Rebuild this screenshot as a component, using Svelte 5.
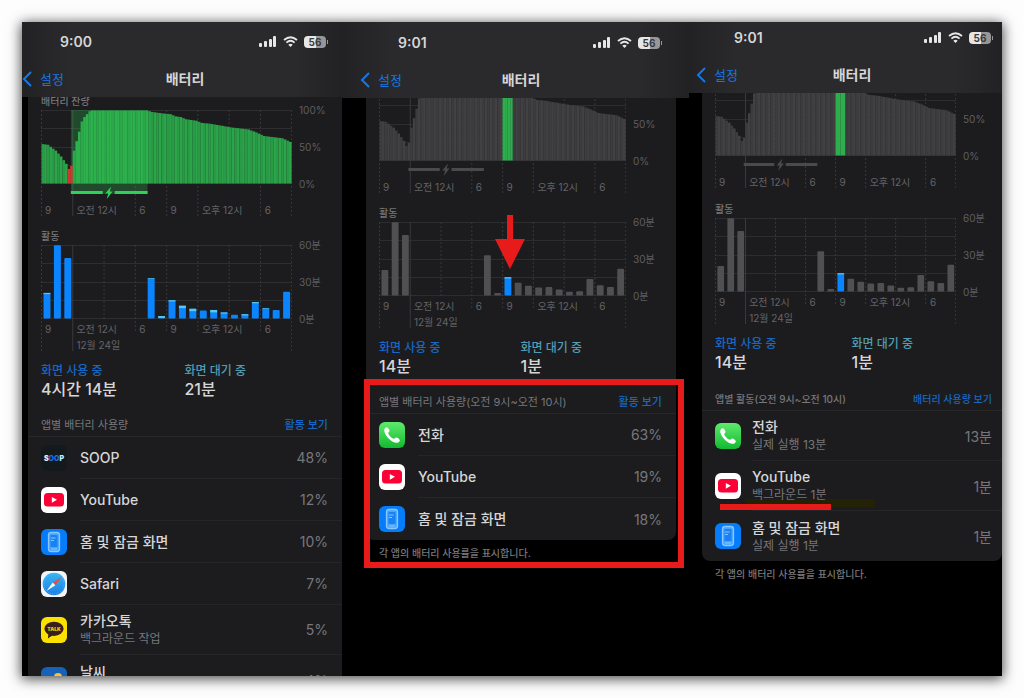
<script>
    // [slot, percent] pairs, one slot per 15 minutes
    const levelPoints = [
        [0, 54], [2, 53], [5, 45], [7, 37], [9, 27], [10, 20], [11, 24],
        [12, 45], [13, 58], [14, 71], [15, 85], [16, 91], [17, 95], [18, 99],
        [19, 100], [40, 100], [42, 98], [46, 96], [49, 95], [51, 92], [53, 91],
        [55, 88], [59, 86], [61, 83], [64, 82], [69, 79], [72, 77], [79, 74],
        [82, 70], [85, 65], [92, 62], [95, 57],
    ];

    const levels = Array.from({ length: 96 }, (_, slot) => {
        const next = levelPoints.findIndex((p) => p[0] >= slot);
        const [x2, y2] = levelPoints[next];
        if (x2 === slot) return y2;
        const [x1, y1] = levelPoints[next - 1];
        return y1 + ((y2 - y1) * (slot - x1)) / (x2 - x1);
    });

    // minutes per hour: [total, screen-off part]
    const activity = [
        [21, 1], [60, 0], [49.5, 0], [0, 0], [0, 0], [0, 0], [0, 0], [0, 0],
        [0, 0], [0, 0], [33, 0.5], [2, 1.5], [15, 1], [10.5, 2], [8, 2],
        [6.5, 0], [7, 2], [5, 1], [3, 0], [3.5, 1], [13.5, 1], [8.5, 0.5],
        [7, 0], [22, 0],
    ];

    const ticks = [
        { label: "9", span: 1 },
        { label: "오전 12시", span: 2 },
        { label: "6", span: 1 },
        { label: "9", span: 1 },
        { label: "오후 12시", span: 2 },
        { label: "6", span: 1 },
    ];

    const phones = [
        {
            id: "day",
            time: "9:00",
            selected: null,
            onTime: "4시간 14분",
            offTime: "21분",
            title: "앱별 배터리 사용량",
            action: "활동 보기",
            apps: [
                { icon: "soop", name: "SOOP", value: "48%" },
                { icon: "youtube", name: "YouTube", value: "12%" },
                { icon: "home", name: "홈 및 잠금 화면", value: "10%" },
                { icon: "safari", name: "Safari", value: "7%" },
                { icon: "kakao", name: "카카오톡", note: "백그라운드 작업", value: "5%" },
                { icon: "weather", name: "날씨", note: "백그라운드 작업", value: "4%" },
            ],
        },
        {
            id: "usage",
            time: "9:01",
            selected: 12,
            onTime: "14분",
            offTime: "1분",
            title: "앱별 배터리 사용량(오전 9시~오전 10시)",
            action: "활동 보기",
            apps: [
                { icon: "phone", name: "전화", value: "63%" },
                { icon: "youtube", name: "YouTube", value: "19%" },
                { icon: "home", name: "홈 및 잠금 화면", value: "18%" },
            ],
            footer: "각 앱의 배터리 사용률을 표시합니다.",
        },
        {
            id: "activity",
            time: "9:01",
            selected: 12,
            onTime: "14분",
            offTime: "1분",
            title: "앱별 활동(오전 9시~오전 10시)",
            action: "배터리 사용량 보기",
            apps: [
                { icon: "phone", name: "전화", note: "실제 실행 13분", value: "13분" },
                { icon: "youtube", name: "YouTube", note: "백그라운드 1분", value: "1분", marked: true },
                { icon: "home", name: "홈 및 잠금 화면", note: "실제 실행 1분", value: "1분" },
            ],
            footer: "각 앱의 배터리 사용률을 표시합니다.",
        },
    ];

    function levelColor(slot, selected) {
        if (selected !== null) {
            if (Math.floor(slot / 4) === selected) return "#2fae4e";
            return slot % 2 ? "#414143" : "#3c3c3e";
        }
        if (levels[slot] < 25) return "#d0382f";
        if (slot > 11 && slot < 41) return slot % 3 ? "#2db14d" : "#2ba94a";
        return slot % 2 ? "#2ca54a" : "#299a46";
    }
</script>

{#snippet gridLines(short)}
    {#each [0, 18, 37, 55, 73] as y}
        <line x1="0" x2="252" y1={y + 0.5} y2={y + 0.5} stroke="#2e2e30" />
    {/each}
    {#each [0, 1, 2, 3, 4, 5, 6, 7, 8] as n}
        <line
            x1={n * 31.4 + 0.5}
            x2={n * 31.4 + 0.5}
            y1="0"
            y2={n > 1 && n < 8 ? (n % 4 === 2 ? 74 : short) : 106}
            stroke={n === 1 ? "#3a3a3c" : "#39393b"}
            stroke-dasharray={n === 1 ? "none" : "2 2"}
        />
    {/each}
{/snippet}

{#snippet appIcon(name)}
    <svg class="app-icon" viewBox="0 0 26 26" aria-hidden="true">
        <defs>
            <linearGradient id="call" x1="0" y1="0" x2="0" y2="1">
                <stop offset="0" stop-color="#5fea6d" />
                <stop offset="1" stop-color="#12ba31" />
            </linearGradient>
            <linearGradient id="compass" x1="0" y1="0" x2="0" y2="1">
                <stop offset="0" stop-color="#35b6f2" />
                <stop offset="1" stop-color="#1d7fe6" />
            </linearGradient>
        </defs>
        {#if name === "soop"}
            <rect width="26" height="26" rx="6" fill="#14191d" />
            <text x="13" y="15.5" text-anchor="middle" font-size="7" font-weight="900" fill="#e8eef2"
                >S<tspan fill="#1c6fe8">OO</tspan><tspan fill="#c4f0f0">P</tspan></text
            >
        {:else if name === "youtube"}
            <rect width="26" height="26" rx="6" fill="#fff" />
            <rect x="3" y="6" width="20" height="13.5" rx="3.5" fill="#fb0236" />
            <path d="M10.8 9.9 L16 12.8 L10.8 15.7 Z" fill="#fff" />
        {:else if name === "home"}
            <rect width="26" height="26" rx="6" fill="#057cf9" />
            <rect x="7.5" y="3.5" width="11" height="19" rx="2.5" fill="#4aa3fc" stroke="#8ac6ff" stroke-width="1.3" />
            <rect x="9.5" y="6" width="7" height="12" rx="1" fill="#1782f3" />
            <path d="M10 9h4.5M10 11.5h3M10 20h6" stroke="#8ac6ff" stroke-width="1" fill="none" />
        {:else if name === "safari"}
            <rect width="26" height="26" rx="6" fill="#f4f4f6" />
            <circle cx="13" cy="13" r="11.3" fill="url(#compass)" />
            <circle cx="13" cy="13" r="10" fill="none" stroke="#7cc8fb" stroke-width="1" stroke-dasharray="0.5 1.6" />
            <path d="M20.5 6 L11.7 11.5 L14.4 14.3 Z" fill="#ee4b40" />
            <path d="M5.5 20 L11.7 11.5 L14.4 14.3 Z" fill="#f4f6f8" />
        {:else if name === "kakao"}
            <rect width="26" height="26" rx="6" fill="#fae100" />
            <ellipse cx="13" cy="11.8" rx="9.6" ry="7.1" fill="#3a1d1d" />
            <path d="M7.5 16 L6.9 21.4 L12 18 Z" fill="#3a1d1d" />
            <text x="13" y="13.8" text-anchor="middle" font-size="5" font-weight="900" fill="#e6cd04">TALK</text>
        {:else if name === "weather"}
            <rect width="26" height="26" rx="6" fill="#1762b8" />
            <circle cx="17" cy="10" r="4" fill="#f7c52d" />
            <path d="M5 17a4 4 0 0 1 4-4 5 5 0 0 1 9 1 3 3 0 0 1 1 6H8a3 3 0 0 1-3-3z" fill="#e6f1fb" />
        {:else}
            <rect width="26" height="26" rx="6" fill="url(#call)" />
            <path
                d="M5.4 7.2 C6 5.8 7.2 4.9 8 5.2 C9.3 5.8 10.3 7.6 10.5 8.7 C10.6 9.7 9.2 10.3 9.2 11.2 C9.5 13 13 16.4 14.8 16.8 C15.8 16.8 16.3 15.4 17.3 15.5 C18.5 15.7 20.3 16.8 20.8 18 C21.1 18.9 20 20.2 18.7 20.7 C16.5 21.4 12.5 19.4 9.6 16.4 C6.7 13.5 4.6 9.4 5.4 7.2 Z"
                fill="#fff"
            />
        {/if}
    </svg>
{/snippet}

<main class="page">
    <div class="sheet">
        {#each phones as phone}
            <section class="phone {phone.id}">
                <header class="header">
                    <div class="status">
                        <span class="time">{phone.time}</span>
                        <div class="indicators">
                            <svg width="18" height="12" viewBox="0 0 18 12" fill="#e6e6e6">
                                <rect x="0" y="7" width="3" height="4" rx="1" />
                                <rect x="5" y="5" width="3" height="6" rx="1" />
                                <rect x="10" y="3" width="3" height="8" rx="1" />
                                <rect x="14" y="0" width="3" height="11" rx="1" />
                            </svg>
                            <svg width="15" height="12" viewBox="0 0 15 12" fill="none" stroke="#e6e6e6" stroke-width="1.8">
                                <path d="M1 4 Q7.5 -1.5 14 4" />
                                <path d="M3.4 6.6 Q7.5 3 11.6 6.6" />
                                <path d="M5.3 8.7 Q7.5 7 9.7 8.7 L7.5 11 Z" fill="#e6e6e6" stroke="none" />
                            </svg>
                            <span class="battery">56</span>
                        </div>
                    </div>
                    <nav class="nav">
                        <button class="back">
                            <svg width="10" height="16" viewBox="0 0 10 16" fill="none">
                                <path d="M8.5 1.5 L2 8 L8.5 14.5" stroke="#1478e6" stroke-width="2" stroke-linecap="round" />
                            </svg>
                            <span>설정</span>
                        </button>
                        <h1>배터리</h1>
                    </nav>
                </header>

                <div class="body">
                    <div class="card">
                        <!-- Battery level, caption is scrolled away on the hour views -->
                        {#if phone.selected === null}
                            <h2 class="caption">배터리 잔량</h2>
                        {/if}
                        <div class="chart">
                            <div class="plot">
                                <svg viewBox="0 0 252 106" preserveAspectRatio="none">
                                    {@render gridLines(106)}
                                    {#if phone.selected === null}
                                        <rect x="30" y="0" width="77" height="84" fill="#2fd158" opacity="0.25" />
                                    {/if}
                                    {#each levels as level, slot}
                                        <rect
                                            x={slot * 2.615 + 0.5}
                                            y={73.5 - level * 0.73}
                                            width="2.7"
                                            height={level * 0.73}
                                            fill={levelColor(slot, phone.selected)}
                                        />
                                    {/each}
                                    <g class="charging" class:muted={phone.selected !== null}>
                                        <path d="M30 82.5 H62 M74 82.5 H107" stroke="currentColor" stroke-width="3" />
                                        <path d="M70.5 76.5 L64.5 83.5 H67.5 L66 89 L72 81.5 H69 Z" fill="currentColor" />
                                    </g>
                                </svg>
                                <div class="ticks">
                                    {#each ticks as tick}
                                        <span style="grid-column: span {tick.span}">{tick.label}</span>
                                    {/each}
                                </div>
                            </div>
                            <div class="scale">
                                <span>100%</span>
                                <span>50%</span>
                                <span>0%</span>
                            </div>
                        </div>

                        <!-- Activity -->
                        <h2 class="caption second">활동</h2>
                        <div class="chart">
                            <div class="plot">
                                <svg viewBox="0 0 252 106" preserveAspectRatio="none">
                                    {@render gridLines(88)}
                                    {#each activity as [total, off], hour}
                                        {@const dim = phone.selected !== null && phone.selected !== hour}
                                        {#if total}
                                            <rect
                                                x={hour * 10.46 + 2.5}
                                                y={73.5 - total * 1.22}
                                                width="7"
                                                height={total * 1.22}
                                                rx="1"
                                                fill={dim ? "#505052" : "#0a84ff"}
                                            />
                                            {#if off && !dim}
                                                <rect
                                                    x={hour * 10.46 + 2.5}
                                                    y={73.5 - total * 1.22}
                                                    width="7"
                                                    height={off * 1.22}
                                                    fill="#5ac8e8"
                                                />
                                            {/if}
                                        {/if}
                                    {/each}
                                </svg>
                                <div class="ticks dated">
                                    {#each ticks as tick}
                                        <span style="grid-column: span {tick.span}">{tick.label}</span>
                                    {/each}
                                    <span class="date">12월 24일</span>
                                </div>
                            </div>
                            <div class="scale">
                                <span>60분</span>
                                <span>30분</span>
                                <span>0분</span>
                            </div>
                        </div>

                        <dl class="summary">
                            <div>
                                <dt class="on">화면 사용 중</dt>
                                <dd>{phone.onTime}</dd>
                            </div>
                            <div>
                                <dt class="off">화면 대기 중</dt>
                                <dd>{phone.offTime}</dd>
                            </div>
                        </dl>

                        <div class="list-head">
                            <h2>{phone.title}</h2>
                            <button class="link">{phone.action}</button>
                        </div>
                        <ul class="apps">
                            {#each phone.apps as app}
                                <li class="app" class:tall={app.note}>
                                    {#if app.marked}
                                        <i class="marker"></i>
                                        <i class="underline"></i>
                                    {/if}
                                    {@render appIcon(app.icon)}
                                    <div class="app-row">
                                        <div class="app-text">
                                            <span class="name">{app.name}</span>
                                            {#if app.note}
                                                <span class="note">{app.note}</span>
                                            {/if}
                                        </div>
                                        <span class="value">{app.value}</span>
                                    </div>
                                </li>
                            {/each}
                        </ul>
                    </div>
                    {#if phone.footer}
                        <p class="footer">{phone.footer}</p>
                    {/if}
                </div>

                {#if phone.id === "usage"}
                    <svg class="arrow" width="32" height="54" viewBox="0 0 32 54">
                        <path d="M13 0 H19 V24 H31 L16 54 L1 24 H13 Z" fill="#e81b1b" />
                    </svg>
                    <div class="frame"></div>
                {/if}
            </section>
        {/each}
    </div>
</main>

<style>
    :global(body) {
        margin: 0;
        background: #fdfdfd;
    }

    .page {
        box-sizing: border-box;
        height: 100vh;
        padding: 22px;
        font-family: Inter, "Noto Sans CJK KR", sans-serif;
        color: #d6d6d8;
    }

    .sheet {
        display: grid;
        grid-template-columns: 320fr 347fr 313fr;
        grid-template-rows: 100%;
        height: 100%;
        background: #000;
        box-shadow: 0 2px 12px 1px rgba(0, 0, 0, 0.7);
    }

    .phone {
        --left: 6px;
        --right: 0px;
        --top: 12px;
        --scroll: -12px;
        --edge: 14px;
        position: relative;
        display: flex;
        flex-direction: column;
        min-width: 0;
        overflow: hidden;
    }

    .phone.usage {
        --left: 24px;
        --right: 13px;
        --top: 13px;
        --scroll: -21px;
    }

    .phone.activity {
        --left: 13px;
        --top: 8px;
        --scroll: -21px;
        --edge: 10px;
    }

    h1,
    h2,
    p,
    dl,
    dd,
    ul {
        margin: 0;
        padding: 0;
    }

    button {
        padding: 0;
        border: none;
        background: none;
        font-family: inherit;
        cursor: pointer;
    }

    .header {
        position: relative;
        z-index: 1;
        padding: var(--top) var(--right) 8px var(--left);
        background: linear-gradient(90deg, #222224, #2a2a2c 15%, #2a2a2c 85%, #222224);
    }

    .status {
        display: flex;
        justify-content: space-between;
        align-items: center;
        height: 16px;
        padding: 0 16px 0 32px;
    }

    .activity .status {
        padding-right: 11px;
    }

    .time {
        font-size: 14px;
        font-weight: 600;
        line-height: 16px;
    }

    .indicators {
        display: flex;
        align-items: center;
        gap: 6px;
    }

    .battery {
        position: relative;
        width: 22px;
        border-radius: 4px;
        background: linear-gradient(90deg, #e6e6e6 56%, #97979a 56%);
        color: #3a3a3c;
        font-size: 10px;
        font-weight: 700;
        line-height: 12px;
        text-align: center;
    }

    .battery::after {
        content: "";
        position: absolute;
        top: 4px;
        right: -2px;
        width: 1px;
        height: 4px;
        background: #97979a;
    }

    .nav {
        display: grid;
        grid-template-columns: 1fr auto 1fr;
        align-items: center;
        height: 20px;
        margin-top: 19px;
    }

    .back {
        display: flex;
        align-items: center;
        gap: 8px;
        margin-left: -6px;
        color: #1478e6;
        font-size: 13px;
        line-height: 20px;
    }

    .nav h1 {
        font-size: 14px;
        font-weight: 600;
        line-height: 20px;
    }

    .body {
        margin: var(--scroll) var(--right) 0 var(--left);
    }

    .card {
        padding: 10px 0 0 13px;
        border-radius: 0 0 8px 8px;
        background: #1c1c1e;
    }

    .caption {
        margin-bottom: 3px;
        color: #77777b;
        font-size: 10px;
        font-weight: 500;
        line-height: 12px;
    }

    .caption.second {
        margin-top: 14px;
    }

    .activity .caption.second {
        margin-top: 15px;
    }

    .chart {
        display: flex;
        margin-right: var(--edge);
    }

    .plot {
        flex: 1;
        display: grid;
        min-width: 0;
    }

    .plot svg {
        grid-area: 1 / 1;
        display: block;
        width: 100%;
        height: 106px;
    }

    .charging {
        color: #30d158;
    }

    .charging.muted {
        color: #4a4a4c;
    }

    .ticks {
        grid-area: 1 / 1;
        display: grid;
        grid-template-columns: repeat(8, 1fr);
        align-content: start;
        padding-top: 94px;
        color: #646468;
        font-size: 10px;
        line-height: 12px;
    }

    .ticks.dated {
        row-gap: 4px;
        padding-top: 78px;
    }

    .ticks span {
        min-width: 0;
        padding-left: 4px;
        white-space: nowrap;
    }

    .ticks .date {
        grid-column: 2 / span 3;
    }

    .scale {
        display: flex;
        flex-direction: column;
        justify-content: space-between;
        box-sizing: border-box;
        width: 36px;
        height: 86px;
        margin-top: -6px;
        padding-left: 7px;
        color: #5e5e62;
        font-size: 10px;
        line-height: 12px;
    }

    .summary {
        display: grid;
        grid-template-columns: 1fr 1fr;
        margin: 12px 14px 0 0;
    }

    .summary dt {
        font-size: 12px;
        font-weight: 500;
        line-height: 16px;
    }

    .summary .on {
        color: #1668c4;
    }

    .summary .off {
        color: #4f9db5;
    }

    .summary dd {
        font-size: 16px;
        font-weight: 500;
        line-height: 20px;
    }

    .list-head {
        display: flex;
        justify-content: space-between;
        align-items: center;
        margin-left: -13px;
        padding: 18px var(--edge) 3px 13px;
        border-bottom: 1px solid #272729;
        line-height: 16px;
        white-space: nowrap;
    }

    .activity .list-head {
        padding-top: 19px;
    }

    .list-head h2 {
        color: #77777b;
        font-size: 11px;
        font-weight: 400;
    }

    .link {
        color: #1668c4;
        font-size: 11px;
        font-weight: 500;
        line-height: 16px;
    }

    .activity .list-head h2,
    .activity .link {
        font-size: 10px;
        font-weight: 500;
    }

    .apps {
        list-style: none;
    }

    .app {
        position: relative;
        display: flex;
        align-items: center;
        gap: 13px;
        height: 42px;
    }

    .app.tall {
        height: 50px;
    }

    .activity .app {
        gap: 11px;
    }

    .app-icon {
        flex-shrink: 0;
        width: 26px;
        height: 26px;
    }

    .app-row {
        position: relative;
        flex: 1;
        display: flex;
        justify-content: space-between;
        align-items: center;
        box-sizing: border-box;
        height: 100%;
        padding-right: var(--edge);
        border-bottom: 1px solid #252527;
    }

    .app:last-child .app-row {
        border-bottom: none;
    }

    .app-text {
        display: flex;
        flex-direction: column;
    }

    .name {
        font-size: 14px;
        font-weight: 500;
        line-height: 18px;
    }

    .note {
        color: #77777b;
        font-size: 12px;
        line-height: 17px;
    }

    .value {
        color: #77777b;
        font-size: 14px;
    }

    .footer {
        padding: 6px 13px;
        color: #77777b;
        font-size: 10px;
        font-weight: 500;
        line-height: 14px;
    }

    /* Red marks laid over the screens */
    .arrow {
        position: absolute;
        top: 193px;
        left: 152px;
        z-index: 2;
    }

    .frame {
        position: absolute;
        top: 357px;
        right: 5px;
        left: 22px;
        z-index: 2;
        box-sizing: border-box;
        height: 189px;
        border: 6px solid #e81b1b;
    }

    .marker {
        position: absolute;
        bottom: 4px;
        left: 31px;
        width: 129px;
        height: 8px;
        background: #232106;
    }

    .underline {
        position: absolute;
        bottom: 1px;
        left: 5px;
        width: 111px;
        height: 6px;
        background: #e81b1b;
    }
</style>
